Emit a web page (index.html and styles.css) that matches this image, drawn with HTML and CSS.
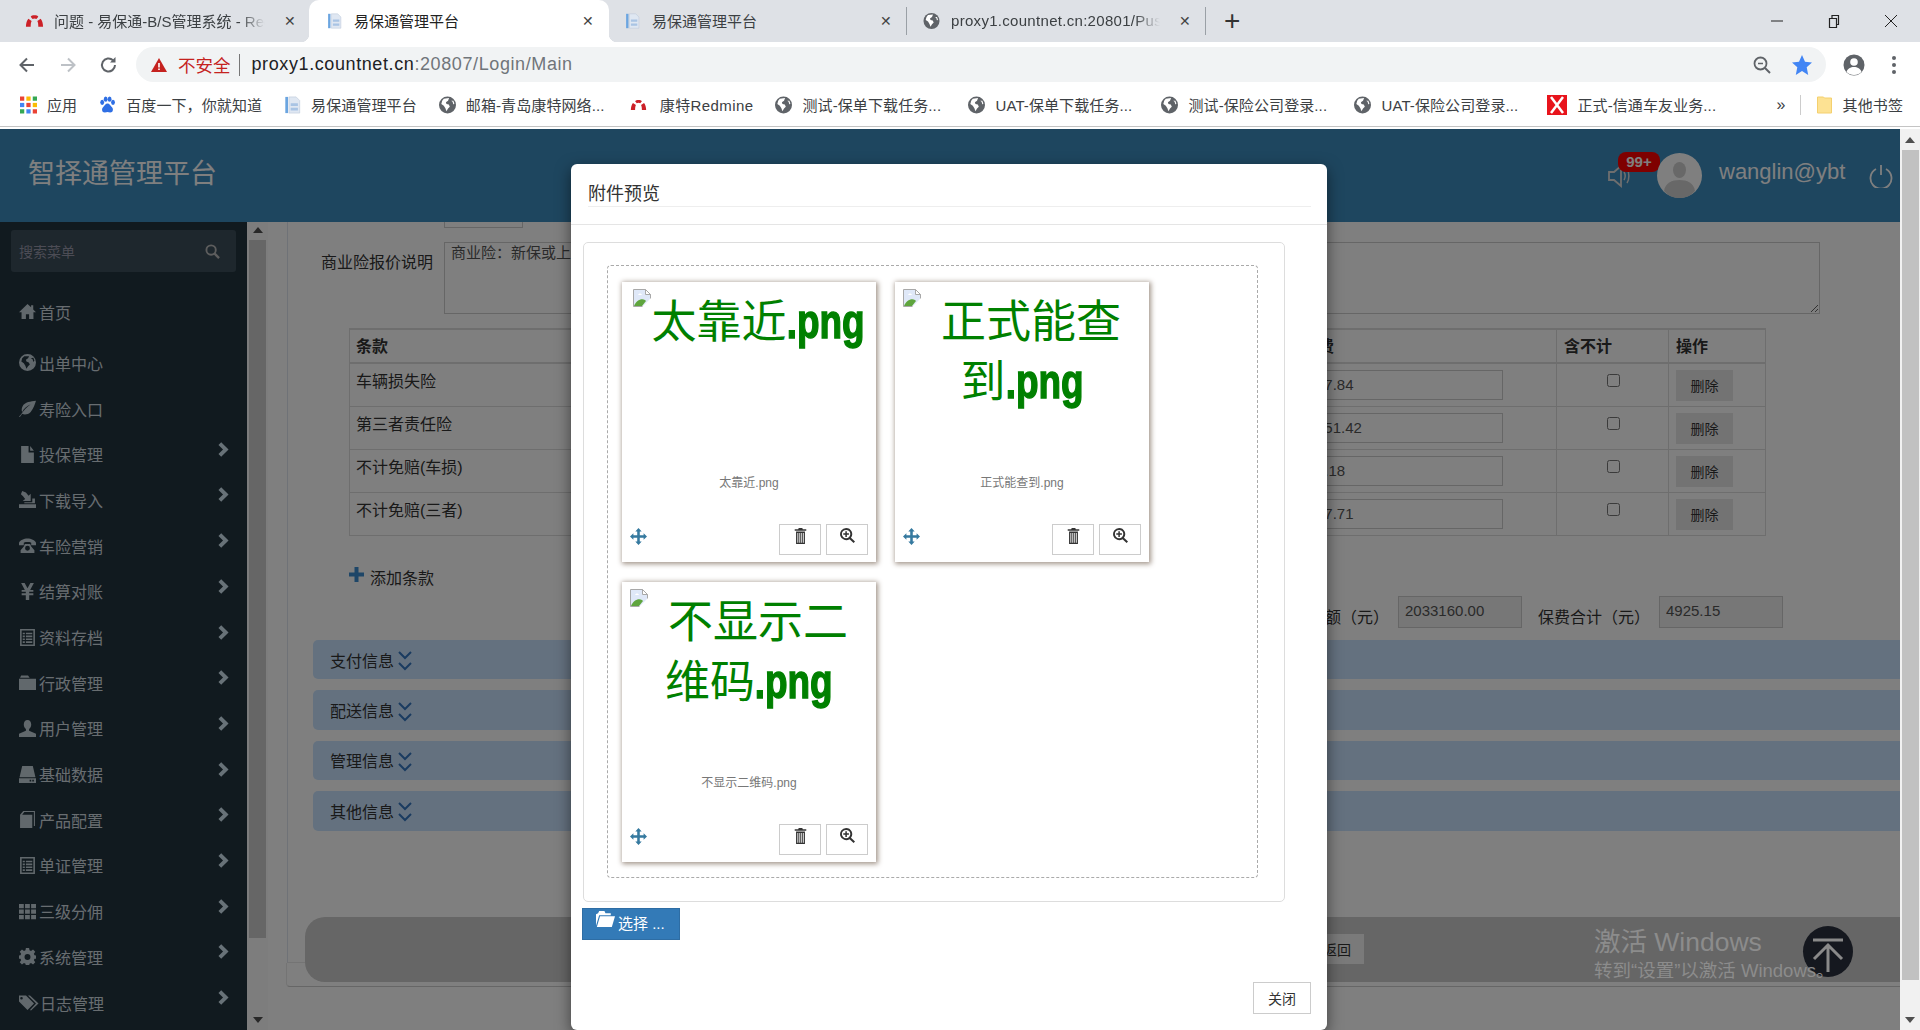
FILE: index.html
```html
<!DOCTYPE html>
<html lang="zh-CN">
<head>
<meta charset="utf-8">
<title>易保通管理平台</title>
<link rel="stylesheet" href="styles.css">
</head>
<body>
<svg class="defs" xmlns="http://www.w3.org/2000/svg">
  <symbol id="i-home" viewBox="0 0 16 16"><path d="M8 1 0 8.6h2.4V15h4.1v-4.5h3V15h4.1V8.6H16L13.4 6V2h-2v2.1z"/></symbol>
  <symbol id="i-globe" viewBox="0 0 16 16"><path fill-rule="evenodd" d="M8 0a8 8 0 1 1 0 16A8 8 0 0 1 8 0zM5 2 3 4l-.8 3 2.3 1.6L6 11l1 2.8 1.5-2.3 1.7-1.6-1-2L7 7l-.5-1.5L8.5 4 9.500 2zM11 4l1.800 1 .7 2.500L14.500 6l-1-2.500z"/></symbol>
  <symbol id="i-leaf" viewBox="0 0 16 16"><path d="M16 .8C11 1.500 5.500 1.800 3.300 6c-1 2-.9 4-.3 5.300C4.500 8 7.500 5.500 11 4 7.500 6.500 4 10 1.500 14.200L0 15.500l.8.500 2.200-3c2 1 5.500.8 8-1.800C14 8 14.800 4 16 .8z"/></symbol>
  <symbol id="i-file" viewBox="0 0 16 16"><path d="M2 0h7v6h5v10H2zM10.500 0 14 4.500h-3.500z"/></symbol>
  <symbol id="i-import" viewBox="0 0 16 16"><path d="M0 12.500h16V16H0zM3 0l3.500 1.500L9 4.500 11 2.500v7H3.500l2.300-2L3.800 5 1.800 3zM12.500 7H15v4.500H5v-1h7.500z"/></symbol>
  <symbol id="i-phone" viewBox="0 0 16 16"><path d="M0 5.500C1 3 4.500 1.500 8 1.500s7 1.500 8 4v2.300h-4.500V5.300c-1-.5-2.200-.6-3.500-.6s-2.500.1-3.500.6v2.500H0zM5.500 6.500h5l1 2.500 3 3.500V15h-13v-2.500l3-3.500zM8 8.300a2.300 2.300 0 1 0 0 4.600 2.300 2.300 0 0 0 0-4.600z"/></symbol>
  <symbol id="i-yen" viewBox="0 0 16 16"><path d="M2 0h3.300L8 5l2.700-5H14l-3.500 6.500h3v1.800H9.600v1.400h3.900v1.800H9.600V16H6.400v-4.500H2.500V9.700h3.900V8.300H2.500V6.500h3z"/></symbol>
  <symbol id="i-list" viewBox="0 0 16 16"><path fill-rule="evenodd" d="M1 0h14v16H1zM2.500 1.500v13h11v-13zM3.500 3.500h2v1.500h-2zM6.500 3.500h6v1.500h-6zM3.500 6.200h2v1.500h-2zM6.500 6.200h6v1.500h-6zM3.500 8.900h2v1.500h-2zM6.500 8.900h6v1.500h-6zM3.500 11.600h2v1.500h-2zM6.500 11.600h6v1.500h-6z"/></symbol>
  <symbol id="i-folder" viewBox="0 0 16 16"><path d="M0 4.500h16V15H0zM1 3.500 2 1.500h6.500L10 3.500z"/></symbol>
  <symbol id="i-user" viewBox="0 0 16 16"><path d="M8 0c2.200 0 3.500 1.800 3.500 4.200 0 2-1 3.600-2 4.300v1.500L16 13v3H0v-3l6.500-3V8.500c-1-.7-2-2.300-2-4.300C4.500 1.800 5.800 0 8 0z"/></symbol>
  <symbol id="i-hdd" viewBox="0 0 16 16"><path fill-rule="evenodd" d="M3 0h10l2.500 10.500h-15zM0 11.500h16V16H0zM10 13v1.500h1.500V13zM12.500 13v1.500H14V13z"/></symbol>
  <symbol id="i-book" viewBox="0 0 16 16"><path fill-rule="evenodd" d="M4 0h11v14h-1V1H5L3 3.500h9.500V16H1V3.500zM1 3.500z"/></symbol>
  <symbol id="i-th" viewBox="0 0 16 16"><path d="M0 1h4.500v4H0zM5.700 1h4.500v4H5.700zM11.400 1H16v4h-4.600zM0 6.200h4.500v4H0zM5.700 6.200h4.500v4H5.700zM11.400 6.200H16v4h-4.600zM0 11.400h4.500v4H0zM5.700 11.400h4.500v4H5.700zM11.400 11.400H16v4h-4.600z"/></symbol>
  <symbol id="i-cog" viewBox="0 0 16 16"><path fill-rule="evenodd" d="M6.500 0h3l.4 2.200 1.400.6L13.200 1.500l2.100 2.100L14 5.500l.6 1.400L16 7v3l-1.400.1-.6 1.400 1.300 1.900-2.100 2.100-1.900-1.300-1.400.6-.4 2.200h-3l-.4-2.200-1.400-.6-1.900 1.300L.7 13.400 2 11.500l-.6-1.400L0 10V7l1.400-.1.600-1.400L.7 3.600l2.100-2.100 1.900 1.300 1.400-.6zM8 5.700a2.800 2.800 0 1 0 0 5.600 2.800 2.800 0 0 0 0-5.600z"/></symbol>
  <symbol id="i-tags" viewBox="0 0 20 16"><path fill-rule="evenodd" d="M0 1h7l8 8-6.500 6.500L0 7zM2.500 2.500a1.300 1.300 0 1 0 0 2.600 1.300 1.300 0 0 0 0-2.600zM9 1l8 8-6 6.500 1 .5 7.500-7L11 1z"/></symbol>
  <symbol id="i-chev" viewBox="0 0 12 16"><path d="M3.500 0 11.500 8l-8 8L.5 13l5-5-5-5z"/></symbol>
  <symbol id="i-trash" viewBox="0 0 14 18"><path fill-rule="evenodd" d="M5 0h4l.6 1.500H13.500V3H.5V1.500h3.900zM2 4h10v14H2zM3.500 5.500v11h1v-11zM5.700 5.500v11h1v-11zM7.900 5.500v11h1v-11zM10 5.500v11h.8v-11z"/></symbol>
  <symbol id="i-zoom" viewBox="0 0 16 16"><path fill-rule="evenodd" d="M6.500 0a6.500 6.500 0 0 1 5.200 10.400l4.300 4.100-1.500 1.500-4.300-4.100A6.500 6.500 0 1 1 6.500 0zm0 2a4.500 4.500 0 1 0 0 9 4.500 4.500 0 0 0 0-9zM5.700 3.500h1.600v2.200h2.200v1.600H7.300v2.200H5.700V7.300H3.500V5.700h2.200z"/></symbol>
  <symbol id="i-move" viewBox="0 0 16 16"><path d="M8 0l3 3.200H9.200v3.600h3.600V5L16 8l-3.200 3V9.200H9.200v3.600H11L8 16l-3-3.200h1.800V9.200H3.200V11L0 8l3.200-3v1.800h3.600V3.200H5z"/></symbol>
  <symbol id="i-open" viewBox="0 0 18 16"><path d="M2 2 3 0h5l1 2h5v2H3L0 14V3zM3.800 5H18l-3 10H.8z"/></symbol>
  <symbol id="i-dbl" viewBox="0 0 14 20"><path d="M1 1l6 6 6-6M1 12l6 6 6-6" fill="none" stroke="currentColor" stroke-width="2"/></symbol>
  <symbol id="i-redmine" viewBox="0 0 20 16"><path d="M6 3.500C7 1.500 13 1.500 14 3.500L12 6C11 5 9 5 8 6zM1 14c0-4 1-6.500 2.500-8.500L7 8c-.8 1.500-1 3.500-1 6zM14 14c0-2.500-.2-4.500-1-6l3.500-2.500C18 7.500 19 10 19 14z"/></symbol>
  <symbol id="i-doc" viewBox="0 0 18 20"><path d="M1 1h3v18H1z" fill="#6ba5e0"/><path d="M5 1h8l4 4v14H5z" fill="#dfe7f2" stroke="#b7c4d6" stroke-width=".6"/><path d="M7 8h8v3H7zM7 13h8v3H7z" fill="#a9c4e4"/></symbol>
  <symbol id="i-web" viewBox="0 0 16 16"><circle cx="8" cy="8" r="8" fill="#5f6368"/><path d="M4.500 2 9.500 1.500 8.500 4 6.500 5.500 7 7l2.200.6 1 2-1.700 1.600L7 13.800l-1-2.800-1.500-2.400-2.300-1.600.8-3zM11.500 4h2l1 2.500-1 1-.7-2.500z" fill="#fff"/></symbol>
  <symbol id="i-broken" viewBox="0 0 18 18"><path d="M.5.500h12l5 5v12H.5z" fill="#dfe8f8" stroke="#a8a8a8"/><path d="M12.500.500v5h5z" fill="#fff" stroke="#a8a8a8"/><path d="M5 6c1-2 3-2 4 0z" fill="#fff"/><path d="M1 17c2-5 7-8 11-6l1 1-4 5z" fill="#5fa53e"/><path d="M18 9 9 18h9z" fill="#fff"/></symbol>
</svg>

<div class="chrome">
  <div class="tabs">
    <div class="tab tab-first">
      <svg class="fav red"><use href="#i-redmine"/></svg>
      <span class="tab-text fade">问题 - 易保通-B/S管理系统 - Redmine</span>
      <span class="tab-x">✕</span>
    </div>
    <div class="tab tab-active">
      <svg class="fav"><use href="#i-doc"/></svg>
      <span class="tab-text">易保通管理平台</span>
      <span class="tab-x">✕</span>
    </div>
    <div class="tab tab-third">
      <svg class="fav"><use href="#i-doc"/></svg>
      <span class="tab-text">易保通管理平台</span>
      <span class="tab-x">✕</span>
    </div>
    <div class="tab tab-fourth">
      <svg class="fav"><use href="#i-web"/></svg>
      <span class="tab-text fade latin-wide">proxy1.countnet.cn:20801/PushData</span>
      <span class="tab-x">✕</span>
    </div>
    <span class="tab-plus">+</span>
    <div class="win-controls">
      <svg class="win-btn" viewBox="0 0 14 14"><path d="M1 7h12" stroke="#222" fill="none"/></svg>
      <svg class="win-btn" viewBox="0 0 14 14"><path d="M2.500 4.500h7v9h-7zM5 4.500V1.500h6.500v9H9.500" stroke="#222" fill="none" stroke-width="1.200"/></svg>
      <svg class="win-btn" viewBox="0 0 14 14"><path d="M1 1l12 12M13 1 1 13" stroke="#222" fill="none"/></svg>
    </div>
  </div>
  <div class="toolbar">
    <svg class="nav-ic" viewBox="0 0 20 20"><path d="M17 10H4m6-6.500L3.500 10l6.500 6.500" fill="none" stroke="#5f6368" stroke-width="2"/></svg>
    <svg class="nav-ic" viewBox="0 0 20 20"><path d="M3 10h13m-6-6.500 6.500 6.500-6.500 6.500" fill="none" stroke="#bdc1c6" stroke-width="2"/></svg>
    <svg class="nav-ic" viewBox="0 0 20 20"><path d="M16 10a6.500 6.500 0 1 1-2-4.700" fill="none" stroke="#5f6368" stroke-width="2"/><path d="M16.500 2v5.500H11z" fill="#5f6368"/></svg>
    <div class="omnibox">
      <svg class="warn" viewBox="0 0 16 16"><path d="M8 1 16 15H0z" fill="#c5221f"/><path d="M7.200 6h1.600v4.500H7.200zM7.200 11.500h1.600V13H7.200z" fill="#fff"/></svg>
      <span class="insecure">不安全</span>
      <span class="omni-sep"></span>
      <span class="url">proxy1.countnet.cn<span class="url-path">:20807/Login/Main</span></span>
      <svg class="omni-zoom" viewBox="0 0 20 20"><circle cx="8.500" cy="8.500" r="6" fill="none" stroke="#5f6368" stroke-width="1.800"/><path d="M13 13l5 5" stroke="#5f6368" stroke-width="2"/><path d="M6 8.500h5" stroke="#5f6368" stroke-width="1.500"/></svg>
      <svg class="omni-star" viewBox="0 0 20 20"><path d="M10 0l3 6.800 7 .7-5.300 4.800L16.200 20 10 15.900 3.800 20l1.500-7.700L0 7.500l7-.7z" fill="#4285f4"/></svg>
    </div>
    <svg class="profile" viewBox="0 0 22 22"><circle cx="11" cy="11" r="10.500" fill="#5f6368"/><circle cx="11" cy="8" r="3.800" fill="#fff"/><path d="M3.500 18c1-3.500 4-5 7.500-5s6.500 1.500 7.500 5c-2 2-4.500 3-7.500 3s-5.500-1-7.500-3z" fill="#fff"/></svg>
    <svg class="dots" viewBox="0 0 4 20"><circle cx="2" cy="3" r="2" fill="#5f6368"/><circle cx="2" cy="10" r="2" fill="#5f6368"/><circle cx="2" cy="17" r="2" fill="#5f6368"/></svg>
  </div>
  <div class="bookmarks">
    <a class="bm"><svg class="bm-ic" viewBox="0 0 16 16"><path d="M0 0h4v4H0z" fill="#ea4335"/><path d="M6 0h4v4H6z" fill="#fbbc04"/><path d="M12 0h4v4h-4z" fill="#34a853"/><path d="M0 6h4v4H0z" fill="#4285f4"/><path d="M6 6h4v4H6z" fill="#ea4335"/><path d="M12 6h4v4h-4z" fill="#fbbc04"/><path d="M0 12h4v4H0z" fill="#34a853"/><path d="M6 12h4v4H6z" fill="#4285f4"/><path d="M12 12h4v4h-4z" fill="#ea4335"/></svg>应用</a>
    <a class="bm"><svg class="bm-ic" viewBox="0 0 16 16"><ellipse cx="3" cy="5.500" rx="1.800" ry="2.500" fill="#2f6fe4"/><ellipse cx="6.300" cy="2.500" rx="1.800" ry="2.500" fill="#2f6fe4"/><ellipse cx="10" cy="2.500" rx="1.800" ry="2.500" fill="#2f6fe4"/><ellipse cx="13.200" cy="5.500" rx="1.800" ry="2.500" fill="#2f6fe4"/><path d="M8 6.500c2 0 2.500 2 4 3.300 1.800 1.500 1.500 5.200-1.500 5.200-1 0-1.700-.4-2.500-.4s-1.500.4-2.500.4c-3 0-3.300-3.700-1.500-5.200C5.500 8.500 6 6.500 8 6.500z" fill="#2f6fe4"/></svg>百度一下，你就知道</a>
    <a class="bm"><svg class="bm-ic"><use href="#i-doc"/></svg>易保通管理平台</a>
    <a class="bm bm-mail"><svg class="bm-ic"><use href="#i-web"/></svg>邮箱-青岛康特网络...</a>
    <a class="bm bm-redmine"><svg class="bm-ic red"><use href="#i-redmine"/></svg>康特Redmine</a>
    <a class="bm bm-long"><svg class="bm-ic"><use href="#i-web"/></svg>测试-保单下载任务...</a>
    <a class="bm bm-long"><svg class="bm-ic"><use href="#i-web"/></svg>UAT-保单下载任务...</a>
    <a class="bm bm-long"><svg class="bm-ic"><use href="#i-web"/></svg>测试-保险公司登录...</a>
    <a class="bm bm-long"><svg class="bm-ic"><use href="#i-web"/></svg>UAT-保险公司登录...</a>
    <a class="bm"><svg class="bm-ic bm-x" viewBox="0 0 20 20"><path d="M0 0h20v20H0z" fill="#e8141c"/><path d="M4 2l12 16M16 2 4 18" stroke="#fff" stroke-width="2.500"/></svg>正式-信通车友业务...</a>
    <span class="bm-more">»</span>
    <span class="bm-sep"></span>
    <a class="bm bm-other"><svg class="bm-ic" viewBox="0 0 16 18"><path d="M1 1h6l1 1h7v15H1z" fill="#fde293" stroke="#f4d06f"/></svg>其他书签</a>
  </div>
</div>

<div class="window">
  <div class="viewport">
    <header class="topbar">
      <div class="brand">智择通管理平台</div>
      <div class="user-area">
        <div class="speaker">
          <svg class="speaker-ic" viewBox="0 0 25 28"><path d="M1 10h5l7-6v20l-7-6H1z" fill="none" stroke="currentColor" stroke-width="1.800"/><path d="M16 10c1.500 2.500 1.500 5.500 0 8M19 7c2.500 4 2.500 10 0 14" fill="none" stroke="currentColor" stroke-width="1.500"/></svg>
          <span class="badge">99+</span>
        </div>
        <svg class="avatar" viewBox="0 0 45 45"><circle cx="22.500" cy="22.500" r="22.500" fill="#808080"/><ellipse cx="22.500" cy="17" rx="6.500" ry="8" fill="#686868"/><path d="M7 38c1-8 8-11 15.500-11S37 30 38 38c-4 4.500-9 7-15.500 7S11 42.500 7 38z" fill="#686868"/></svg>
        <span class="username">wanglin@ybt</span>
        <svg class="power" viewBox="0 0 24 24"><path d="M7 5a10.500 10.500 0 1 0 10 0M12 1v10" fill="none" stroke="currentColor" stroke-width="1.800"/></svg>
      </div>
    </header>

    <div class="workspace">
      <aside class="sidebar">
        <div class="side-search">
          <span class="side-search-text">搜索菜单</span>
          <svg class="side-search-ic" viewBox="0 0 16 16"><circle cx="6.500" cy="6.500" r="5" fill="none" stroke="currentColor" stroke-width="2"/><path d="M10 10l5 5" stroke="currentColor" stroke-width="2.500"/></svg>
        </div>
        <nav class="menu">
          <a class="menu-item menu-first"><svg class="menu-ic"><use href="#i-home"/></svg><span>首页</span></a>
          <a class="menu-item"><svg class="menu-ic"><use href="#i-globe"/></svg><span>出单中心</span></a>
          <a class="menu-item"><svg class="menu-ic"><use href="#i-leaf"/></svg><span>寿险入口</span></a>
          <a class="menu-item"><svg class="menu-ic"><use href="#i-file"/></svg><span>投保管理</span><svg class="menu-chev"><use href="#i-chev"/></svg></a>
          <a class="menu-item"><svg class="menu-ic"><use href="#i-import"/></svg><span>下载导入</span><svg class="menu-chev"><use href="#i-chev"/></svg></a>
          <a class="menu-item"><svg class="menu-ic"><use href="#i-phone"/></svg><span>车险营销</span><svg class="menu-chev"><use href="#i-chev"/></svg></a>
          <a class="menu-item"><svg class="menu-ic"><use href="#i-yen"/></svg><span>结算对账</span><svg class="menu-chev"><use href="#i-chev"/></svg></a>
          <a class="menu-item"><svg class="menu-ic"><use href="#i-list"/></svg><span>资料存档</span><svg class="menu-chev"><use href="#i-chev"/></svg></a>
          <a class="menu-item"><svg class="menu-ic"><use href="#i-folder"/></svg><span>行政管理</span><svg class="menu-chev"><use href="#i-chev"/></svg></a>
          <a class="menu-item"><svg class="menu-ic"><use href="#i-user"/></svg><span>用户管理</span><svg class="menu-chev"><use href="#i-chev"/></svg></a>
          <a class="menu-item"><svg class="menu-ic"><use href="#i-hdd"/></svg><span>基础数据</span><svg class="menu-chev"><use href="#i-chev"/></svg></a>
          <a class="menu-item"><svg class="menu-ic"><use href="#i-book"/></svg><span>产品配置</span><svg class="menu-chev"><use href="#i-chev"/></svg></a>
          <a class="menu-item"><svg class="menu-ic"><use href="#i-list"/></svg><span>单证管理</span><svg class="menu-chev"><use href="#i-chev"/></svg></a>
          <a class="menu-item"><svg class="menu-ic"><use href="#i-th"/></svg><span>三级分佣</span><svg class="menu-chev"><use href="#i-chev"/></svg></a>
          <a class="menu-item"><svg class="menu-ic"><use href="#i-cog"/></svg><span>系统管理</span><svg class="menu-chev"><use href="#i-chev"/></svg></a>
          <a class="menu-item"><svg class="menu-ic menu-ic-wide"><use href="#i-tags"/></svg><span>日志管理</span><svg class="menu-chev"><use href="#i-chev"/></svg></a>
        </nav>
      </aside>

      <div class="side-scroll">
        <span class="arrow-up"></span>
        <span class="side-thumb"></span>
        <span class="arrow-down"></span>
      </div>

      <main class="content">
        <div class="form-panel">
          <div class="cut-row">
            <label class="cut-label">车费</label>
            <span class="cut-input"></span>
          </div>
          <div class="note-row">
            <label class="note-label">商业险报价说明</label>
            <textarea class="note-area">商业险：新保或上年未出险</textarea>
          </div>
          <table class="terms">
            <colgroup><col class="c-name"><col class="c-fee"><col class="c-free"><col class="c-op"></colgroup>
            <thead><tr><th>条款</th><th>保费</th><th>含不计</th><th>操作</th></tr></thead>
            <tbody>
              <tr><td>车辆损失险</td><td><input class="fee" value="67.84"></td><td class="center"><input type="checkbox" class="chk"></td><td><button class="del">删除</button></td></tr>
              <tr><td>第三者责任险</td><td><input class="fee" value="651.42"></td><td class="center"><input type="checkbox" class="chk"></td><td><button class="del">删除</button></td></tr>
              <tr><td>不计免赔(车损)</td><td><input class="fee" value="3.18"></td><td class="center"><input type="checkbox" class="chk"></td><td><button class="del">删除</button></td></tr>
              <tr><td>不计免赔(三者)</td><td><input class="fee" value="87.71"></td><td class="center"><input type="checkbox" class="chk"></td><td><button class="del">删除</button></td></tr>
            </tbody>
          </table>
          <div class="add-row"><span class="add-plus"><svg viewBox="0 0 15 15"><path d="M5.500 0h4v5.500H15v4H9.500V15h-4V9.500H0v-4h5.500z"/></svg></span><span>添加条款</span></div>
          <div class="totals">
            <span class="total-label">保额（元）</span><input class="total-input" value="2033160.00">
            <span class="total-label total-label-2">保费合计（元）</span><input class="total-input" value="4925.15">
          </div>
          <div class="sections">
            <div class="section-bar"><span>支付信息</span><svg class="dbl"><use href="#i-dbl"/></svg></div>
            <div class="section-bar"><span>配送信息</span><svg class="dbl"><use href="#i-dbl"/></svg></div>
            <div class="section-bar"><span>管理信息</span><svg class="dbl"><use href="#i-dbl"/></svg></div>
            <div class="section-bar"><span>其他信息</span><svg class="dbl"><use href="#i-dbl"/></svg></div>
          </div>
          <div class="action-bar"><button class="back-btn">返回</button></div>
        </div>
        <div class="panel-foot"></div>
      </main>
    </div>

    <div class="backdrop"></div>

    <section class="modal">
      <div class="modal-head"><h4 class="modal-title">附件预览</h4></div>
      <div class="modal-body">
        <div class="drop-panel">
          <div class="drop-zone">
            <article class="card">
              <div class="thumb"><div class="alt"><svg class="broken"><use href="#i-broken"/></svg>太靠近<span class="ext">.png</span></div></div>
              <div class="caption">太靠近.png</div>
              <div class="card-foot">
                <svg class="move"><use href="#i-move"/></svg>
                <button class="card-btn"><svg class="ic-trash"><use href="#i-trash"/></svg></button>
                <button class="card-btn"><svg class="ic-zoom"><use href="#i-zoom"/></svg></button>
              </div>
            </article>
            <article class="card">
              <div class="thumb"><div class="alt"><svg class="broken"><use href="#i-broken"/></svg>正式能查到<span class="ext">.png</span></div></div>
              <div class="caption">正式能查到.png</div>
              <div class="card-foot">
                <svg class="move"><use href="#i-move"/></svg>
                <button class="card-btn"><svg class="ic-trash"><use href="#i-trash"/></svg></button>
                <button class="card-btn"><svg class="ic-zoom"><use href="#i-zoom"/></svg></button>
              </div>
            </article>
            <article class="card">
              <div class="thumb"><div class="alt"><svg class="broken"><use href="#i-broken"/></svg>不显示二维码<span class="ext">.png</span></div></div>
              <div class="caption">不显示二维码.png</div>
              <div class="card-foot">
                <svg class="move"><use href="#i-move"/></svg>
                <button class="card-btn"><svg class="ic-trash"><use href="#i-trash"/></svg></button>
                <button class="card-btn"><svg class="ic-zoom"><use href="#i-zoom"/></svg></button>
              </div>
            </article>
          </div>
        </div>
        <button class="pick-btn"><svg class="pick-ic"><use href="#i-open"/></svg><span>选择 ...</span></button>
        <div class="modal-foot"><button class="close-btn">关闭</button></div>
      </div>
    </section>

    <div class="to-top">
      <svg viewBox="0 0 50 51"><path d="M10 14h30M25 46V19M11 33l14-14 14 14" fill="none" stroke="#8a8a8a" stroke-width="3"/></svg>
    </div>
    <div class="watermark">
      <div class="wm-title">激活 Windows</div>
      <div class="wm-sub">转到“设置”以激活 Windows。</div>
    </div>
  </div>

  <div class="page-scroll">
    <span class="arrow-up arrow-page"></span>
    <span class="page-thumb"></span>
    <span class="arrow-down arrow-page"></span>
  </div>
</div>
</body>
</html>
```
FILE: styles.css
```css
* { box-sizing: border-box; }
html, body { margin: 0; height: 100%; }
body {
  width: 1920px; height: 1030px; overflow: hidden; background: #fff;
  font-family: "Liberation Sans", "Noto Sans CJK SC", sans-serif;
  color: #333;
}
button, input, textarea { font-family: inherit; }
.defs { display: none; }

/* browser chrome */
.chrome { height: 129px; background: #fff; }
.tabs { height: 42px; background: #dee1e6; display: flex; align-items: center; font-size: 15px; color: #3c4043; }
.tab { height: 42px; display: flex; align-items: center; position: relative; flex: none; }
.tab-first { width: 309px; padding: 0 13px 0 25px; }
.tab-active { width: 300px; padding: 0 15px 0 16px; background: #fff; border-radius: 10px 10px 0 0; color: #222; }
.tab-active::before, .tab-active::after { content: ""; position: absolute; bottom: 0; width: 8px; height: 8px; }
.tab-active::before { left: -8px; background: radial-gradient(circle at 0 0, transparent 8px, #fff 8.5px); }
.tab-active::after { right: -8px; background: radial-gradient(circle at 100% 0, transparent 8px, #fff 8.5px); }
.tab-third { width: 298px; padding: 0 14px; border-right: 1px solid #9aa0a6; height: 28px; }
.tab-fourth { width: 299px; padding: 0 14px 0 15px; border-right: 1px solid #9aa0a6; height: 28px; }
.fav { width: 19px; height: 16px; flex: none; margin-right: 10px; }
.red { fill: #cc2027; }
.tab-text { flex: 1; white-space: nowrap; overflow: hidden; margin-top: -2px; }
.latin-wide { letter-spacing: .3px; }
.fade { -webkit-mask-image: linear-gradient(90deg, #000 88%, transparent); mask-image: linear-gradient(90deg, #000 88%, transparent); margin-right: 11px; }
.tab-x { flex: none; width: 12px; font-size: 14px; color: #444; text-align: center; margin-left: 8px; }
.tab-plus { font-size: 28px; font-weight: 400; margin-left: 18px; color: #333; line-height: 1; }
.win-controls { margin-left: auto; display: flex; gap: 43px; padding-right: 22px; }
.win-btn { width: 14px; height: 14px; }

.toolbar { height: 46px; padding: 5px 17px 6px; display: flex; align-items: center; gap: 21px; }
.nav-ic { width: 20px; height: 20px; flex: none; }
.omnibox { margin-left: -4px; width: 1690px; height: 35px; background: #f1f3f4; border-radius: 18px; display: flex; align-items: center; padding: 0 14px 0 15px; flex: none; font-size: 18px; }
.warn { width: 16px; height: 16px; flex: none; margin-right: 11px; }
.insecure { color: #c5221f; font-size: 17.500px; }
.omni-sep { width: 1px; height: 22px; background: #777; margin: 0 12px 0 8px; }
.url { color: #202124; letter-spacing: .6px; }
.url-path { color: #70757a; }
.omni-zoom { width: 20px; height: 20px; margin-left: auto; margin-right: 20px; }
.omni-star { width: 20px; height: 20px; }
.profile { width: 22px; height: 22px; flex: none; margin-left: -4px; }
.dots { width: 4px; height: 20px; flex: none; margin-left: 6px; }

.bookmarks { height: 39px; padding: 0 17px 5px 20px; display: flex; align-items: center; gap: 22px; font-size: 15px; color: #3c4043; border-bottom: 1px solid #c4c4c4; letter-spacing: .1px; }
.bm { display: flex; align-items: center; gap: 10px; white-space: nowrap; flex: none; }
.bm-ic { width: 17px; height: 18px; flex: none; }
.bm-x { width: 20px; height: 20px; }
.bm-mail { width: 169px; }
.bm-redmine { letter-spacing: .4px; gap: 13px; }
.bm-long { width: 171px; }
.bm-more { margin-left: auto; font-size: 16px; }
.bm-sep { width: 1px; height: 20px; background: #ccc; margin: 0 -7px 0 -8px; }

/* page */
.window { height: 901px; display: flex; }
.viewport { width: 1900px; height: 901px; position: relative; overflow: hidden; display: flex; flex-direction: column; }
.topbar { height: 93px; flex: none; background: #3c8cbe; display: flex; align-items: center; justify-content: space-between; padding: 0 7px 0 28px; }
.brand { font-size: 27px; color: #fff; margin-top: -9px; }
.user-area { display: flex; align-items: center; color: #fff; }
.speaker { position: relative; width: 25px; height: 28px; margin-right: 24px; }
.speaker-ic { width: 25px; height: 28px; color: #ddd; }
.badge { position: absolute; left: 10px; top: -10px; width: 42px; height: 20px; background: #f00; border-radius: 8px; color: #fff; font-size: 15px; font-weight: 700; text-align: center; line-height: 20px; }
.avatar { width: 45px; height: 45px; margin-right: 17px; filter: brightness(2); }
.username { font-size: 22px; width: 150px; margin-top: -8px; }
.power { width: 24px; height: 24px; }

.workspace { flex: 1; min-height: 0; display: flex; }
.sidebar { width: 247px; flex: none; background: #22343e; padding-top: 8px; }
.side-search { margin: 0 11px; height: 42px; background: #3c4e5a; border-radius: 3px; display: flex; align-items: center; justify-content: space-between; padding: 0 16px 0 8px; color: #aab; font-size: 14px; }
.side-search-text { color: #99a; }
.side-search-ic { width: 15px; height: 15px; color: #bbb; }
.menu { padding-top: 17px; }
.menu-item { height: 45.7px; display: flex; align-items: center; padding: 0 18px 0 19px; font-size: 16px; color: #d0dae0; }
.menu-first { margin-bottom: 5.400px; }
.menu-ic { width: 17px; height: 17px; flex: none; margin-right: 3px; fill: #c3d0d8; }
.menu-ic-wide { width: 20px; margin-right: 1px; }
.menu-chev { width: 11px; height: 15px; flex: none; margin-left: auto; margin-bottom: 10px; fill: #d0e4f0; }

.side-scroll { width: 21px; flex: none; background: #fafafa; display: flex; flex-direction: column; align-items: center; }
.side-thumb { width: 17px; height: 698px; background: #ccc; }
.arrow-up, .arrow-down { flex: none; width: 0; height: 0; border-left: 5px solid transparent; border-right: 5px solid transparent; }
.arrow-up { border-bottom: 6px solid #505050; margin: 5px 0 7px; }
.arrow-down { border-top: 6px solid #505050; margin-top: auto; margin-bottom: 7px; }

.content { flex: 1; min-width: 0; background: #fff; padding-left: 19px; overflow: hidden; }
.form-panel { height: 763px; border-left: 1px solid #dfe5ee; border-bottom: 1px solid #e8e8e8; position: relative; }
.cut-row { height: 28px; margin-top: -22px; display: flex; padding-left: 113px; font-size: 16px; }
.cut-label { width: 43px; }
.cut-input { width: 79px; height: 28px; border: 1px solid #ccc; }
.note-row { display: flex; margin-top: 14px; height: 72px; }
.note-label { width: 145px; text-align: right; font-size: 16px; margin-top: 7px; padding-right: 0; }
.note-area { margin-left: 11px; width: 1376px; height: 72px; border: 1px solid #ccc; padding: 0 6px; font-size: 15px; color: #555; line-height: 20px; }
.terms { margin: 14px 0 0 61px; width: 1416px; border-collapse: collapse; table-layout: fixed; font-size: 16px; border-top: 2px solid #ddd; }
.c-name { width: 945px; }
.c-fee { width: 262px; }
.c-free { width: 112px; }
.c-op { width: 97px; }
.terms th { height: 34px; padding: 0 7px 2px; text-align: left; border: 1px solid #ddd; border-top: 0; border-bottom: 2px solid #ddd; font-weight: 700; vertical-align: middle; }
.terms td { height: 43px; padding: 6px 7px 5px; border: 1px solid #ddd; vertical-align: top; line-height: 24px; }
.terms th:first-child, .terms td:first-child { padding-left: 6px; }
.center { text-align: center; }
.fee { display: block; width: 201px; height: 30px; border: 1px solid #ccc; padding: 0 0 2px 13px; font-size: 15px; color: #555; background: #fff; }
.chk { display: block; margin: 4px auto 0; width: 13px; height: 13px; transform: translateX(1px); }
.del { display: block; margin-left: 0; width: 57px; height: 31px; background: #e6e6e6; border: 0; font-size: 14px; color: #333; padding: 0 0 2px; }
.add-row { margin: 29px 0 0 61px; height: 24px; display: flex; align-items: center; gap: 6px; font-size: 16px; }
.add-plus { width: 15px; height: 15px; margin-top: -6px; display: block; }
.add-plus svg { display: block; width: 15px; height: 15px; fill: #3c8dd0; }
.totals { margin-top: 7px; height: 32px; display: flex; justify-content: flex-end; align-items: flex-start; padding-right: 117px; font-size: 16px; }
.total-label { margin-top: 8px; margin-right: 9px; }
.total-label-2 { margin-left: 16px; }
.total-input { width: 124px; height: 32px; background: #eee; border: 1px solid #ccc; padding: 0 0 3px 6px; font-size: 15px; color: #555; }
.sections { margin-top: 12px; padding-left: 25px; display: flex; flex-direction: column; gap: 11px; }
.section-bar { height: 39.400px; background: #c9e3ff; border-radius: 5px 0 0 5px; display: flex; align-items: center; padding-left: 17px; font-size: 16px; gap: 3px; }
.dbl { width: 16px; height: 20px; color: #3476c0; margin-top: 3px; }
.action-bar { margin: 86px 0 0 17px; height: 65px; background: #ccc; border-radius: 20px 0 0 20px; display: flex; align-items: center; justify-content: flex-end; padding-right: 536px; }
.back-btn { width: 54px; height: 30px; background: #f4f4f4; border: 0; font-size: 14px; color: #333; padding: 0; }
.panel-foot { height: 24px; border-left: 1px solid #e8e8e8; border-bottom: 1px solid #ccc; border-radius: 0 0 0 4px; margin-left: -1px; }

.backdrop { position: absolute; inset: 0; background: rgba(0, 0, 0, .5); }

.modal { position: absolute; left: 571px; top: 35px; width: 756px; height: 866px; background: #fff; border-radius: 6px; box-shadow: 0 5px 15px rgba(0, 0, 0, .5); overflow: hidden; display: flex; flex-direction: column; }
.modal-head { height: 61px; flex: none; padding: 16px 16px 0 17px; border-bottom: 1px solid #e5e5e5; }
.modal-title { margin: 0; font-size: 18px; font-weight: 400; line-height: 28px; height: 27px; border-bottom: 1px solid #eee; color: #333; }
.modal-body { padding: 17px 16px 0 12px; flex: 1; display: flex; flex-direction: column; align-items: flex-start; }
.drop-panel { width: 702px; height: 660px; border: 1px solid #ddd; border-radius: 5px; padding: 22px 26px 0 23px; flex: none; }
.drop-zone { width: 651px; height: 613px; border: 1px dashed #aaa; border-radius: 4px; padding: 16px 14px; display: flex; flex-wrap: wrap; align-content: flex-start; gap: 20px 19px; }
.card { width: 254px; height: 280px; background: #fff; box-shadow: 1px 1px 5px 1px #a2958a; padding: 7px 8px; display: flex; flex-direction: column; }
.thumb { height: 180px; flex: none; overflow: hidden; }
.alt { width: fit-content; margin: 0 auto; font-size: 45px; line-height: 60px; text-align: center; color: #008000; font-family: "Noto Sans CJK SC", sans-serif; }
.broken { float: left; width: 18px; height: 18px; }
.ext { display: inline-block; font-family: "Liberation Sans", sans-serif; font-size: 48px; font-weight: 700; transform: scaleX(.77); margin: 0 -11.650px; -webkit-text-stroke: 1.400px #008000; }
.caption { margin-top: 4px; height: 20px; line-height: 20px; font-size: 12px; color: #777; text-align: center; flex: none; }
.card-foot { margin-top: auto; display: flex; align-items: center; gap: 5px; }
.move { width: 17px; height: 17px; margin-right: auto; margin-bottom: 6px; fill: #35799f; }
.card-btn { width: 42px; height: 31px; background: #fff; border: 1px solid #ccc; padding: 3px 0 0; display: flex; justify-content: center; align-items: flex-start; }
.ic-trash { width: 13px; height: 16px; fill: #333; }
.ic-zoom { width: 15px; height: 15px; fill: #333; }
.pick-btn { margin: 6px 0 0 -1px; width: 98px; height: 32px; background: #337ab7; border: 1px solid #2e6da4; color: #fff; font-size: 15px; padding: 0 0 3px 13px; display: flex; align-items: center; gap: 3px; flex: none; }
.pick-ic { width: 19px; height: 17px; fill: #fff; margin-top: -6px; }
.modal-foot { margin-top: 42px; align-self: flex-end; }
.close-btn { display: block; width: 58px; height: 32px; background: #fff; border: 1px solid #ccc; font-size: 14px; color: #333; padding: 0; }

.to-top { position: absolute; left: 1803px; top: 797px; width: 50px; height: 51px; border-radius: 50%; background: #15181f; }
.to-top svg { display: block; width: 50px; height: 51px; }
.watermark { position: absolute; left: 1594px; top: 796px; color: #8c8c8c; font-family: "Liberation Sans", "Noto Sans CJK SC", sans-serif; white-space: nowrap; }
.wm-title { font-size: 26.500px; line-height: 34px; }
.wm-sub { font-size: 18.500px; line-height: 24px; }

.page-scroll { width: 20px; flex: none; background: #f1f1f1; display: flex; flex-direction: column; align-items: center; }
.page-thumb { width: 17px; height: 830px; background: #c1c1c1; margin-top: 2px; }
.arrow-page.arrow-up { margin: 8px 0 5px; }
.arrow-page.arrow-down { margin-bottom: 7px; }
```
